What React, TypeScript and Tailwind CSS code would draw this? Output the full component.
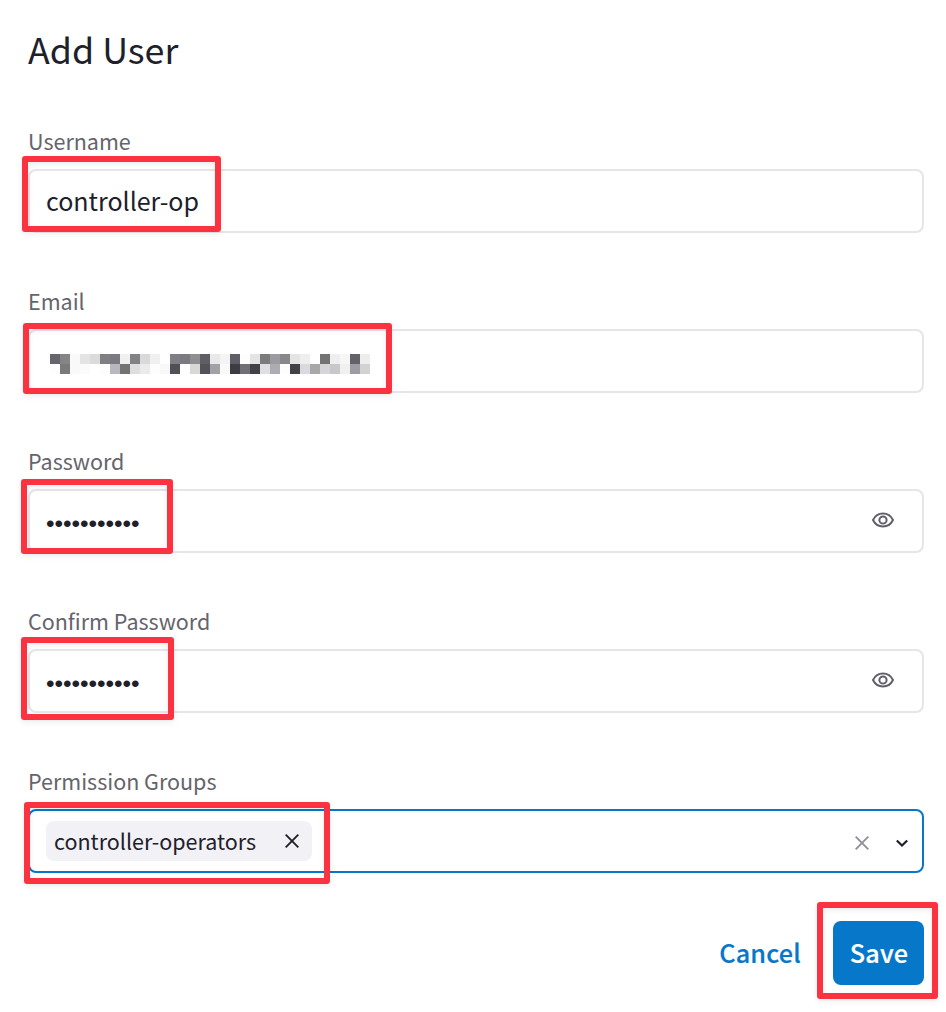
import type { ReactNode } from 'react';

const MOSAIC: string[] = [
  '#66656b', '#858585', '#f9f9f9', '#e4e4e4', '#dbdbdb', '#7f7e82', '#7b7a80', '#f0f0f0',
  '#828284', '#d9d9dc', '#f0f0f1', '#ffffff', '#7f7e85', '#7b7a80', '#8f8f91', '#5f5e66',
  '#e8e8e8', '#f4f4f4', '#5f5e66', '#fdfdfd', '#e4e4e4', '#7b7b7c', '#9c9ba1', '#88878c',
  '#e4e4e4', '#eeeeee', '#ffffff', '#737374', '#eeeeee', '#f6f6f6', '#636268', '#ededed',
  '#fdfdfd', '#7a7a7a', '#f9f9f9', '#fbfbfb', '#ffffff', '#fdfdfd', '#b9b8bf', '#737374',
  '#dedede', '#ebebeb', '#fdfdfd', '#f8f8f8', '#505056', '#ffffff', '#d8d8d8', '#535257',
  '#a3a1a7', '#f9f9f9', '#3d3c43', '#706f76', '#424147', '#dfdfe1', '#adacb3', '#fdfdfd',
  '#424147', '#dad9dd', '#a8a8a8', '#d6d6d8', '#c8c8ca', '#f0f0f0', '#9d9ca2', '#d2d2d4',
];

function Highlight({ className }: { className: string }) {
  return (
    <div
      className={`pointer-events-none absolute rounded-[3px] border-6 border-[#fb3341] shadow-[0_2px_6px_rgba(0,0,0,0.08),inset_0_2px_6px_rgba(0,0,0,0.08)] ${className}`}
    />
  );
}

function Field({ label, active, highlight, children }: {
  label: string;
  active?: boolean;
  highlight: string;
  children: ReactNode;
}) {
  return (
    <div className="flex flex-col">
      <label className="-mt-px flex h-8 items-center text-[21.5px] leading-8 text-[#65646b]">{label}</label>
      <div className="relative mt-3">
        <div
          className={`flex h-16 items-center rounded-lg border-2 px-4 ${active ? 'border-[#0677c9]' : 'border-[#e5e5ea]'}`}
        >
          {children}
        </div>
        <Highlight className={highlight} />
      </div>
    </div>
  );
}

function Eye() {
  return (
    <svg className="mr-[11px] mb-[2px] ml-auto h-6 w-6" viewBox="0 0 24 24" fill="none" stroke="#62616a" strokeWidth="2">
      <path d="M2 12C4.200 7.500 7.800 5.500 12 5.500S19.800 7.500 22 12C19.800 16.500 16.200 18.500 12 18.500S4.200 16.500 2 12Z" />
      <circle cx="12" cy="12" r="3.600" />
    </svg>
  );
}

function Cross({ className }: { className: string }) {
  return (
    <svg className={className} viewBox="0 0 14 14" fill="none" stroke="currentColor" strokeWidth="1.900">
      <path d="M.7.7 13.300 13.300M13.300.7.7 13.300" />
    </svg>
  );
}

function Dots() {
  return (
    <span className="mt-[6px] font-['Liberation_Sans',sans-serif] text-[24.4px] leading-7 tracking-[-0.04px] text-[#20202a]">
      •••••••••••
    </span>
  );
}

export default function App() {
  return (
    <main className="h-[1012px] w-full overflow-hidden bg-white pt-[22px] pr-[22px] pl-7 font-['Noto_Sans_CJK_JP','Noto_Sans_CJK_SC',sans-serif] text-[#20202a]">
      <h1 className="h-[104px] text-[35.800px] leading-[52px]">Add User</h1>
      <div className="flex flex-col gap-[53px]">
        <Field label="Username" highlight="-left-[6px] -top-[13px] h-[76px] w-[199px]">
          <span className="-mt-[2px] text-[25px] leading-8">controller-op</span>
        </Field>
        <Field label="Email" highlight="-left-[5px] -top-[6px] h-[71px] w-[369px]">
          <div className="ml-1 mt-[6px] grid grid-cols-[repeat(32,10px)] grid-rows-[10px_10px]">
            {MOSAIC.map((color, i) => (
              <span key={i} style={{ backgroundColor: color }} />
            ))}
          </div>
        </Field>
        <Field label="Password" highlight="-left-[7px] -top-[10px] h-[75px] w-[152px]">
          <Dots />
          <Eye />
        </Field>
        <Field label="Confirm Password" highlight="-left-[7px] -top-[12px] h-[83px] w-[153px]">
          <Dots />
          <Eye />
        </Field>
        <Field label="Permission Groups" active highlight="-left-[4px] -top-[7px] h-[82px] w-[306px]">
          <div className="flex h-10 w-[266px] items-center justify-between rounded-lg bg-[#f2f1f6] pr-[13px] pl-2">
            <span className="text-[21.500px] leading-8">controller-operators</span>
            <Cross className="h-[14px] w-[14px]" />
          </div>
          <Cross className="mt-1 mr-[27px] ml-auto h-[14px] w-[14px] text-[#91909a]" />
          <svg className="mt-1 mr-[-2px] h-3 w-3" viewBox="0 0 12 12" fill="none" stroke="#20202a" strokeWidth="2.200">
            <path d="M.8 3.500 6 8.500 11.200 3.500" />
          </svg>
        </Field>
      </div>
      <div className="mt-12 flex h-16 items-center justify-end gap-8 text-[25.200px] leading-8 font-medium tracking-[0.2px]">
        <button className="-mt-[2px] text-[#0677c9] [-webkit-text-stroke:0.2px_#0677c9]">Cancel</button>
        <div className="relative">
          <button className="h-16 w-[91px] rounded-lg bg-[#0677c9] pb-[2px] pl-px text-white [-webkit-text-stroke:0.2px_white]">Save</button>
          <Highlight className="-top-[19px] -left-[16px] h-[97px] w-[121px]" />
        </div>
      </div>
    </main>
  );
}
